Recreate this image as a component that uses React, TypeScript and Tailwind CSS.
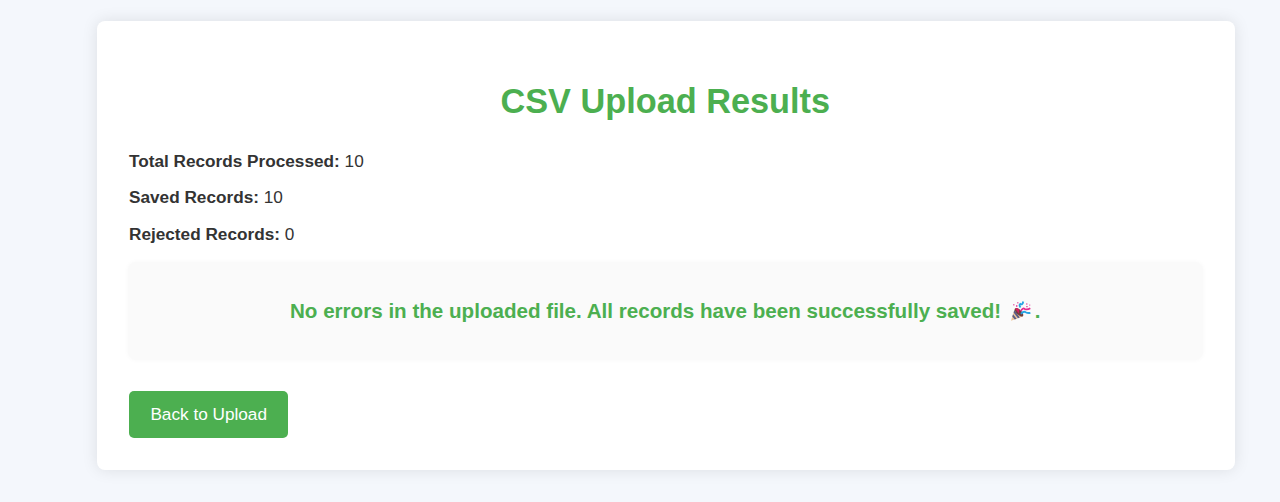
import React from "react";

function Stat({ label, value }: { label: string; value: number }) {
  return (
    <p className="h-6 text-[17.2px] leading-6 text-[#333]">
      <strong className="font-bold">{label}:</strong> {value}
    </p>
  );
}

function PartyPopper() {
  return (
    <svg viewBox="0 0 22 22" className="mx-[3px] inline-block h-[22px] w-[22px] align-[-4px]" aria-hidden="true">
      <path d="M4.8 8.5 13 16.3 1 20.8Z" fill="#ecc49a" />
      <path d="M4.4 10 9.8 17.6 8 18.3 3.6 12.5Z M3 14.2 6.6 18.8 4.8 19.5 2.3 16.5Z" fill="#5c5e88" />
      <ellipse cx="9" cy="12.3" rx="2.5" ry="5.5" transform="rotate(-45 9 12.3)" fill="#71403f" />
      <path d="M5.3 8.7Q6.8 6.8 9.2 9.8L8.8 13.5Z" fill="#d81b60" />
      <path d="M10.5 7.5Q8.6 4.8 10.4 3.9 12.6 5.4 13.2 1.5" fill="none" stroke="#27a4e3" strokeWidth="1.8" />
      <path d="M10.8 11Q12.8 7.3 14.7 9 17.3 10.2 20.3 8.3" fill="none" stroke="#e52b91" strokeWidth="1.7" />
      <path d="M11 13.8Q13.7 10.8 15.6 12.2 18 13.4 20.4 12.8" fill="none" stroke="#27a4e3" strokeWidth="1.8" />
      <path d="M3 4h1.5v1.5H3zM7 2h1.5v1.5H7zM16 3.3h1.5v1.5H16zM19 4.5h1.3v1.3H19z" fill="#e87dba" />
      <path d="M6 5.3h1.4v1.4H6zM16.3 6h1.3v1.3h-1.3z" fill="#e52b91" />
    </svg>
  );
}

export default function App() {
  return (
    <div className="h-[502px] overflow-hidden bg-[#f4f7fc] pl-[97px] pt-[20.5px] font-['Liberation_Sans',Arial,sans-serif]">
      <main className="h-[449.5px] w-[1137.5px] rounded-[8px] bg-white px-8 pt-[60px] shadow-[0_0_16px_rgba(0,0,0,0.1)]">
        <h1 className="-ml-px mb-7 h-10 text-center text-[34.3px] font-bold leading-10 text-[#4caf50]">
          CSV Upload Results
        </h1>
        <div className="grid grid-rows-[36px_37px_24px]">
          <Stat label="Total Records Processed" value={10} />
          <Stat label="Saved Records" value={10} />
          <Stat label="Rejected Records" value={0} />
        </div>
        <section className="-ml-px mt-[16px] flex h-[98px] items-center justify-center rounded-[8px] bg-[#fafafa] pt-px text-[20.6px] font-bold text-[#4caf50] shadow-[0_0_5px_rgba(0,0,0,0.03)]">
          <p className="whitespace-nowrap">
            No errors in the uploaded file. All records have been successfully saved! <PartyPopper />.
          </p>
        </section>
        <button className="mt-[31px] h-[47px] w-[159.4px] rounded-[5px] bg-[#4caf50] pt-px text-[17.2px] text-white">
          Back to Upload
        </button>
      </main>
    </div>
  );
}
